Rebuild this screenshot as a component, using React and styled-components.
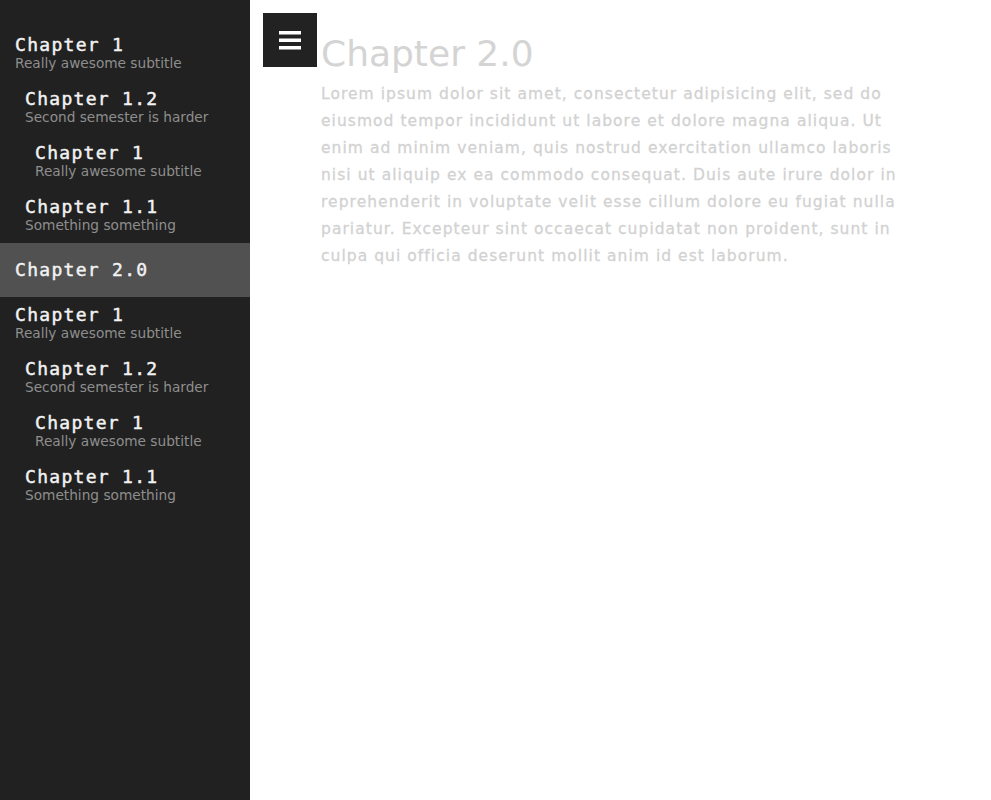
import React from 'react'
import styled, { createGlobalStyle } from 'styled-components'

const GlobalStyle = createGlobalStyle`
  html, body {
    margin: 0;
    padding: 0;
    height: 100%;
    background: #fff;
  }
  #root {
    height: 100%;
  }
`

const group = [
  {
    title: 'Chapter 1',
    subtitle: 'Really awesome subtitle',
    children: [
      {
        title: 'Chapter 1.2',
        subtitle: 'Second semester is harder',
        children: [{ title: 'Chapter 1', subtitle: 'Really awesome subtitle' }],
      },
      { title: 'Chapter 1.1', subtitle: 'Something something' },
    ],
  },
]

const chapters = [
  ...group,
  { title: 'Chapter 2.0', active: true },
  ...group,
]

const lorem =
  'Lorem ipsum dolor sit amet, consectetur adipisicing elit, sed do eiusmod tempor incididunt ut labore et dolore magna aliqua. Ut enim ad minim veniam, quis nostrud exercitation ullamco laboris nisi ut aliquip ex ea commodo consequat. Duis aute irure dolor in reprehenderit in voluptate velit esse cillum dolore eu fugiat nulla pariatur. Excepteur sint occaecat cupidatat non proident, sunt in culpa qui officia deserunt mollit anim id est laborum.'

function ChapterList({ items, depth }) {
  return (
    <List>
      {items.map((item, i) => (
        <li key={i}>
          <Entry $depth={depth} $active={item.active}>
            <Title>{item.title}</Title>
            {item.subtitle && <Subtitle>{item.subtitle}</Subtitle>}
          </Entry>
          {item.children && <ChapterList items={item.children} depth={depth + 1} />}
        </li>
      ))}
    </List>
  )
}

function App() {
  return (
    <>
      <GlobalStyle />
      <Page>
        <Sidebar>
          <ChapterList items={chapters} depth={0} />
        </Sidebar>
        <Main>
          <MenuButton aria-label="menu">
            <svg width="22" height="19" viewBox="0 0 22 19">
              <rect x="0" y="0" width="22" height="3.5" fill="#fff" />
              <rect x="0" y="7.5" width="22" height="3.5" fill="#fff" />
              <rect x="0" y="15" width="22" height="3.5" fill="#fff" />
            </svg>
          </MenuButton>
          <Content>
            <Heading>Chapter 2.0</Heading>
            <Body>{lorem}</Body>
          </Content>
        </Main>
      </Page>
    </>
  )
}

const Page = styled.div`
  display: flex;
  min-height: 100%;
  height: 800px;
`

const Sidebar = styled.nav`
  width: 250px;
  flex-shrink: 0;
  background: #212121;
  padding-top: 27px;
  box-sizing: border-box;
`

const List = styled.ul`
  list-style: none;
  margin: 0;
  padding: 0;
`

const Entry = styled.div`
  padding: ${(p) => (p.$active ? '16px' : '7px')} 15px ${(p) => (p.$active ? '16px' : '10px')}
    ${(p) => 15 + p.$depth * 10}px;
  background: ${(p) => (p.$active ? '#515151' : 'transparent')};
`

const Title = styled.div`
  font-family: 'DejaVu Sans Mono', monospace;
  font-size: 18px;
  line-height: 22px;
  letter-spacing: 1.3px;
  color: #f2f2f2;
  -webkit-text-stroke: 0.45px #f2f2f2;
`

const Subtitle = styled.div`
  font-family: 'DejaVu Sans', sans-serif;
  font-size: 13.7px;
  line-height: 15px;
  color: #8e8e8e;
`

const Main = styled.main`
  flex: 1;
  display: flex;
  align-items: flex-start;
  padding: 13px 0 0 13px;
  gap: 4px;
`

const MenuButton = styled.button`
  width: 54px;
  height: 54px;
  flex-shrink: 0;
  border: none;
  background: #222;
  display: flex;
  align-items: center;
  justify-content: center;
  padding: 0;
  cursor: pointer;
`

const Content = styled.article`
  width: 586px;
  padding-top: 19px;
`

const Heading = styled.h1`
  margin: 0;
  font-family: 'DejaVu Sans', sans-serif;
  font-weight: normal;
  font-size: 36px;
  line-height: 43px;
  color: #d4d4d4;
`

const Body = styled.p`
  margin: 6px 0 0;
  font-family: 'DejaVu Sans', sans-serif;
  font-size: 15.5px;
  letter-spacing: 1.05px;
  line-height: 27px;
  color: #d2d2d2;
  -webkit-text-stroke: 0.3px #d2d2d2;
`

export default App
